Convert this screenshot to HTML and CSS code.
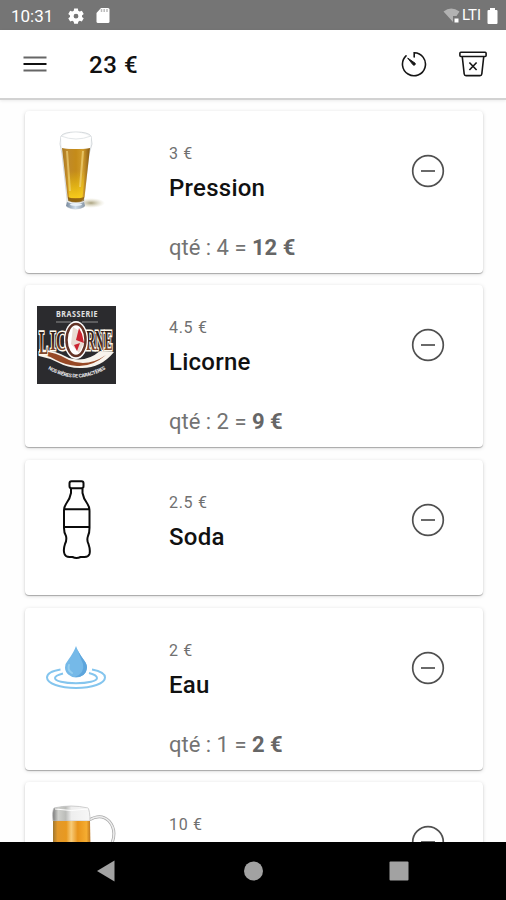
FILE: index.html
```html
<!DOCTYPE html>
<html lang="fr">
<head>
<meta charset="utf-8">
<title>23 €</title>
<link rel="stylesheet" href="styles.css">
</head>
<body>
<div class="phone">
  <div class="status">
    <span class="clock">10:31</span>
    <svg class="gear" width="18" height="18" viewBox="0 0 24 24"><path fill="#fff" fill-rule="evenodd" d="M9.500 2h5l.5 3 2 1.100 2.800-1.100 2.500 4.300-2.300 1.900v2l2.300 1.900-2.500 4.300-2.800-1.100-2 1.200-.5 2.900h-5L9 19.500l-2-1.200-2.800 1.100-2.500-4.300L4 13.200v-2L1.700 9.300 4.200 5 7 6.100 9 5zM12 9a3.200 3.200 0 1 0 0 6.400A3.200 3.200 0 0 0 12 9z"/></svg>
    <svg class="sd" width="14" height="17" viewBox="0 0 14 17"><path fill="#fff" d="M5 1h7q1.500 0 1.500 1.500v12q0 1.500-1.500 1.500H2Q.5 16 .5 14.500V6z"/><path stroke="#bbb" stroke-width="1.500" d="M5.500 2v3M8.200 2v3M11 2v3"/></svg>
    <div class="signals">
      <svg width="18" height="16" viewBox="0 0 18 16"><path fill="#b2b2b2" d="M.5 3.500Q8-2.500 16.500 3.500L13.500 8H10v6z"/><path fill="#fff" d="M11.500 10.500h4v4h-4z"/></svg>
      <span class="network">LTI</span>
      <svg width="11" height="18" viewBox="0 0 11 18"><path fill="#fff" d="M3 1h5v2h1.500q1 0 1 1v12q0 1-1 1h-8q-1 0-1-1V4q0-1 1-1H3z"/></svg>
    </div>
  </div>
  <header class="bar">
    <svg width="24" height="18" viewBox="0 0 24 18"><path stroke="#666" stroke-width="2" d="M.5 2.500h23M.5 15.500h23"/><path stroke="#111" stroke-width="2" d="M.5 9h23"/></svg>
    <h1 class="total">23 €</h1>
    <div class="actions">
      <svg width="26" height="26" viewBox="0 0 26 26" fill="none" stroke="#151515" stroke-linecap="round"><path stroke-width="1.600" d="M13.200 6V1.700A11.500 11.500 0 1 1 5 4.900"/><path fill="#151515" stroke-width="1" d="M7 7.300 14.100 12.200a1.300 1.300 0 0 1-1.800 1.800z"/></svg>
      <svg width="28" height="26" viewBox="0 0 28 26" fill="none" stroke="#151515" stroke-width="1.600" stroke-linejoin="round"><rect x=".9" y="1.200" width="26.200" height="4.300" rx="1"/><path d="M3.300 6 5.200 23q.2 1.600 1.800 1.600h14q1.600 0 1.800-1.600L24.700 6M10.400 11.500l7.200 7.500M17.600 11.500l-7.200 7.500"/></svg>
    </div>
  </header>
  <main class="list">
    <article class="card">
      <svg class="thumb" viewBox="0 0 80 80">
        <defs>
          <linearGradient id="beer"><stop stop-color="#a87820"/><stop offset=".18" stop-color="#c08a2b"/><stop offset=".5" stop-color="#c48b19"/><stop offset=".75" stop-color="#d19c2c"/><stop offset="1" stop-color="#865811"/></linearGradient>
          <linearGradient id="glow" x2="0" y2="1"><stop offset=".45" stop-color="#fd0" stop-opacity="0"/><stop offset="1" stop-color="#ffd51c" stop-opacity=".85"/></linearGradient>
          <linearGradient id="foot"><stop stop-color="#76879b"/><stop offset=".5" stop-color="#d0deeb"/><stop offset="1" stop-color="#8694a3"/></linearGradient>
          <radialGradient id="shade"><stop stop-color="#aaa27f"/><stop offset="1" stop-color="#ddd8bb" stop-opacity="0"/></radialGradient>
        </defs>
        <ellipse cx="54" cy="72" rx="14" ry="5" fill="url(#shade)"/>
        <path fill="#f3f5f6" stroke="#cbd0d4" stroke-width=".8" d="M24 5q3-4 15-4t15 4l1 8-3 10-5 45v8q-9 4-17 0v-8l-5-45-2-10z"/>
        <path fill="url(#beer)" d="M25 17q14 2 28 0l-5.500 49q-1 5-9 5t-8-5z"/>
        <path fill="url(#glow)" d="M28 18h22l-4.500 49H32z"/>
        <path stroke="#f2d67f" stroke-width="2" opacity=".65" d="M30 20l3 40M46 20l-3 36"/>
        <path fill="#fff" d="M24 6q14-9 30 0l-1 11q-14 2-28 0z"/>
        <path fill="none" stroke="#e2e6e8" d="M24 5q15 6 30 0"/>
        <path fill="#76500a" opacity=".65" d="M31 66q7 3 16 0v4q-8 3-16 0z"/>
        <path fill="url(#foot)" d="M30 71q8 3 17 0l1 4q-3 3-9 3t-10-3z"/>
        <ellipse cx="39" cy="73.500" rx="6" ry="1.500" fill="#e9f1f8"/>
      </svg>
      <div class="info"><div class="price">3 €</div><div class="name">Pression</div><div class="qty">qté : 4 = <b>12 €</b></div></div>
      <svg class="minus" viewBox="0 0 34 34"><circle cx="17" cy="17" r="15.300"/><path d="M10 17h14"/></svg>
    </article>

    <article class="card">
      <svg class="thumb" viewBox="0 0 80 80">
        <defs><linearGradient id="copper" x2="0" y2="1"><stop stop-color="#241815"/><stop offset=".5" stop-color="#42251c"/><stop offset="1" stop-color="#aa603a"/></linearGradient>
        <path id="motto" d="M11 64Q39 81 69 64"/></defs>
        <path fill="#2b2b2e" d="M0 1h79v78H0z"/>
        <text class="brewery" transform="translate(19 12) scale(.8 1)" textLength="52">BRASSERIE</text>
        <path stroke="#aaa" stroke-width=".8" d="M19 17h15M45 17h16"/>
        <path fill="#f8f4ed" d="M2 44q16 1 30 9 17 5 31-7l14 1q-14 17-34 16-12 0-23-6-8-4-18-6z"/>
        <path fill="#974926" d="M4 46q15 1 28 9 18 8 37-5-14 12-29 11Q28 60 19 55 12 51 4 49z"/>
        <g class="wordmark"><text transform="translate(2 49) scale(.75 1.850)" font-size="18">L</text><text transform="translate(13 45) scale(.85 1.500)" font-size="18">IC</text><text transform="translate(49 45) scale(.7 1.600)" font-size="18">RNE</text></g>
        <ellipse cx="39" cy="35" rx="12" ry="19" fill="#fff"/>
        <ellipse cx="39" cy="35" rx="9.500" ry="16" fill="none" stroke="#633326" stroke-width="2.500"/>
        <path fill="#eadbd2" d="m36 22 8 5 3 11-5 10-8-9z"/><path fill="#cb2431" d="m42 23-3 12 8 3-2-9zM37 40l6-2-3 8z"/>
        <text class="motto"><textPath href="#motto" textLength="61">NOS BIÈRES DE CARACTÈRES</textPath></text>
      </svg>
      <div class="info"><div class="price">4.5 €</div><div class="name">Licorne</div><div class="qty">qté : 2 = <b>9 €</b></div></div>
      <svg class="minus" viewBox="0 0 34 34"><circle cx="17" cy="17" r="15.300"/><path d="M10 17h14"/></svg>
    </article>

    <article class="card short">
      <svg class="thumb" viewBox="0 0 80 80" fill="none" stroke="#0b0b0b" stroke-width="2" stroke-linejoin="round"><path d="M34.500 1.200h10q2 0 2 2v3q0 2-2 2h-10q-2 0-2-2v-3q0-2 2-2zM34 8v5q-1 6-5 11-2 3-2 7v17q0 5 2 8 1 4-1 8-2 6-.5 10 1 3 5 3l3 0q4 2 8 0l4 0q4 0 5-3 1-4-1-10-2-4-.5-8 1.500-3 1.500-8V31q0-4-2-7-4-5-5-11V8M27 29.300h25.500M27 47h25.500"/></svg>
      <div class="info"><div class="price">2.5 €</div><div class="name">Soda</div></div>
      <svg class="minus" viewBox="0 0 34 34"><circle cx="17" cy="17" r="15.300"/><path d="M10 17h14"/></svg>
    </article>

    <article class="card">
      <svg class="thumb" viewBox="0 0 80 80"><g fill="none" stroke="#84c5ee" stroke-width="2"><path d="M23.500 41.500C14 43 10 46 10 49.500 10 55.500 23 60 39 60s29-4.500 29-10.500c0-3.500-5-6.500-13-8"/><path d="M26 45.500q-8 2-8 4.500c0 3 9 5.300 21 5.300S60 53 60 50q0-3-8-5"/></g><path fill="#75b9e8" d="M39 18q2 6 7.500 13.500Q50 36 50 39.500A11 10 0 0 1 28 39.500q0-4 3.500-8Q37 24 39 18z"/><path fill="#5da5dc" d="M39 18q2 6 7.500 13.500Q50 36 50 39.500q-1 10-12 9.500 10-4 8-13z"/><path fill="none" stroke="#94ceef" stroke-width="2" stroke-linecap="round" d="M32 37q-2 5 3 8"/></svg>
      <div class="info"><div class="price">2 €</div><div class="name">Eau</div><div class="qty">qté : 1 = <b>2 €</b></div></div>
      <svg class="minus" viewBox="0 0 34 34"><circle cx="17" cy="17" r="15.300"/><path d="M10 17h14"/></svg>
    </article>

    <article class="card">
      <svg class="thumb" viewBox="0 0 80 80">
        <defs><linearGradient id="mug"><stop stop-color="#9f772f"/><stop offset=".12" stop-color="#e3992a"/><stop offset=".35" stop-color="#e89920"/><stop offset=".48" stop-color="#f7cb78"/><stop offset=".65" stop-color="#e8941b"/><stop offset=".88" stop-color="#f5ad31"/><stop offset="1" stop-color="#b76f1b"/></linearGradient><linearGradient id="foam"><stop stop-color="#777"/><stop offset=".15" stop-color="#d0d1cd"/><stop offset=".35" stop-color="#bbbcb9"/><stop offset=".5" stop-color="#eee"/><stop offset="1" stop-color="#f7f7f7"/></linearGradient></defs>
        <path fill="none" stroke="#aaa" stroke-width="3" d="M52 18q12-7 20 1 8 9 3 22"/><path fill="none" stroke="#eee" stroke-width="1.500" d="M52 18q12-7 20 1 8 9 3 22"/>
        <path fill="url(#foam)" stroke="#bbb" stroke-width=".7" d="M17 6q17-4 34 0 2 3 2 13H16Q15 9 17 6z"/><path fill="url(#mug)" d="M16 19h37l1 53H16z"/><path fill="none" stroke="#fff" d="M18 7q16 3 33 0"/>
      </svg>
      <div class="info"><div class="price">10 €</div></div>
      <svg class="minus" viewBox="0 0 34 34"><circle cx="17" cy="17" r="15.300"/><path d="M10 17h14"/></svg>
    </article>
  </main>
  <nav class="nav">
    <svg width="506" height="58" viewBox="0 0 506 58" fill="#a2a2a2"><path d="M97 29 114.500 18.500v21z"/><circle cx="253.500" cy="29" r="9.500"/><rect x="389.500" y="19.500" width="19" height="19" rx="1"/></svg>
  </nav>
</div>
</body>
</html>
```
FILE: styles.css
```css
* { box-sizing: border-box; }
body { margin: 0; font-family: Roboto, sans-serif; background: #fff; }
svg { display: block; flex: none; }
.phone { height: 900px; display: flex; flex-direction: column; overflow: hidden; }
.status { flex: none; height: 30px; display: flex; align-items: center; padding: 1px 8px 0 11px; background: #757575; color: #fff; }
.clock { width: 42px; margin-right: 13.500px; font-size: 17px; line-height: 28px; white-space: nowrap; }
.sd { margin-left: 11px; }
.signals { margin-left: auto; display: flex; align-items: center; }
.network { width: 22px; margin: 0 3px 0 1px; font-size: 15px; line-height: 26px; padding-bottom: 2px; }
.bar { flex: none; height: 70px; display: flex; align-items: center; padding: 0 19px 0 23px; background: #fff; border-bottom: 2px solid #d2d2d2; box-shadow: 0 1px 3px rgba(0,0,0,.08); z-index: 1; }
.total { margin: 1px 0 0 42px; font-size: 24px; font-weight: 500; line-height: 28px; color: #111; letter-spacing: .6px; }
.actions { margin-left: auto; display: flex; gap: 32px; }
.list { flex: 1; min-height: 0; overflow: hidden; display: flex; flex-direction: column; gap: 12.400px; padding: 11px 23px 0 25px; background: #fefefe; }
.card { flex: none; height: 162px; display: flex; padding: 20px 38px 0 12px; border-radius: 4px; background: #fff; box-shadow: 0 1px 1px rgba(0,0,0,.28), 0 1px 4px rgba(0,0,0,.14); }
.card.short { height: 135.500px; }
.thumb { width: 80px; height: 80px; }
.info { margin-left: 52px; padding-top: 13px; white-space: nowrap; }
.price { font-size: 16px; line-height: 20px; letter-spacing: .7px; color: #707070; }
.name { margin-top: 10px; font-size: 24px; line-height: 28px; font-weight: 500; letter-spacing: .25px; color: #111; }
.qty { margin-top: 33px; font-size: 22px; line-height: 26px; color: #737373; }
.qty b { font-weight: 700; color: #666; }
.minus { width: 34px; height: 34px; margin: 23px 0 0 auto; fill: none; stroke: #505050; stroke-width: 1.700; }
.brewery { font: 700 9px "Open Sans", sans-serif; fill: #e1e1e1; }
.wordmark { font-family: "Liberation Serif", serif; font-weight: 700; fill: url(#copper); stroke: #fff9ec; stroke-width: 2; paint-order: stroke; }
.motto { font: 700 5px Roboto, sans-serif; fill: #eee; }
.nav { flex: none; height: 58px; background: #000; }
```
